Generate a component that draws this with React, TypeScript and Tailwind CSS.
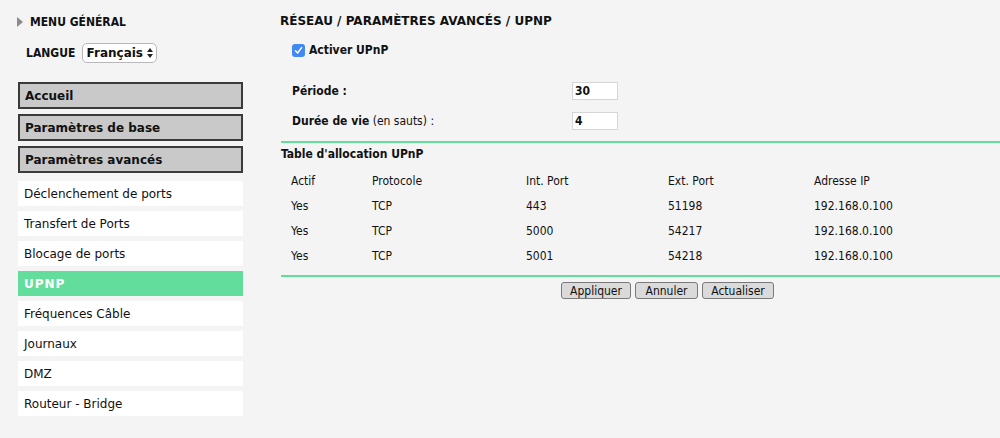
const grayItems = ['Accueil', 'Paramètres de base', 'Paramètres avancés']

const subItems = [
  'Déclenchement de ports',
  'Transfert de Ports',
  'Blocage de ports',
  'UPNP',
  'Fréquences Câble',
  'Journaux',
  'DMZ',
  'Routeur - Bridge',
]

const rows = [
  ['Yes', 'TCP', '443', '51198', '192.168.0.100'],
  ['Yes', 'TCP', '5000', '54217', '192.168.0.100'],
  ['Yes', 'TCP', '5001', '54218', '192.168.0.100'],
]

const buttons = [
  { label: 'Appliquer', width: 'w-[70px]' },
  { label: 'Annuler', width: 'w-[63px]' },
  { label: 'Actualiser', width: 'w-[72px]' },
]

const verdana = "font-['DejaVu_Sans',Verdana,sans-serif]"
const tahoma = "font-['DejaVu_Sans_Condensed','DejaVu_Sans',Tahoma,sans-serif]"

function Sidebar() {
  return (
    <aside className={`w-[262px] shrink-0 pl-[18px] pr-[19px] ${verdana}`}>
      <div className="flex h-[40px] items-center gap-[7px] pt-[3px]">
        <svg width="6" height="10" viewBox="0 0 6 10" className="-ml-[1px]">
          <path d="M0 0 L6 5 L0 10 Z" fill="#8a8a8a" />
        </svg>
        <span className={`text-[12px] font-bold text-[#111] ${tahoma}`}>MENU GÉNÉRAL</span>
      </div>
      <div className="mt-[3px] flex items-center gap-[7px] pl-[8px]">
        <span className={`text-[12px] font-bold text-[#111] ${tahoma}`}>LANGUE</span>
        <div className="flex h-[20px] w-[75px] items-center justify-center gap-[4px] rounded-[5px] border border-[#b8b8b8] bg-white text-[12px] font-bold text-[#111]">
          Français
          <svg width="6" height="10" viewBox="0 0 6 10">
            <path d="M3 0 L6 4 L0 4 Z M3 10 L6 6 L0 6 Z" fill="#222" />
          </svg>
        </div>
      </div>
      <ul className="mt-[19px] flex flex-col gap-[5px]">
        {grayItems.map((item) => (
          <li
            key={item}
            className="flex h-[27px] items-center border-2 border-[#3a3a3a] bg-[#c9c9c9] pl-[5px] text-[12px] font-bold text-[#111]"
          >
            {item}
          </li>
        ))}
      </ul>
      <ul className="mt-[8px] flex flex-col gap-[5px]">
        {subItems.map((item) =>
          item === 'UPNP' ? (
            <li
              key={item}
              className="flex h-[25px] items-center bg-[#62dd9b] pl-[6px] text-[12px] font-bold tracking-[1px] text-white"
            >
              {item}
            </li>
          ) : (
            <li
              key={item}
              className="flex h-[25px] items-center bg-white pl-[6px] text-[12px] text-[#111]"
            >
              {item}
            </li>
          ),
        )}
      </ul>
    </aside>
  )
}

function Content() {
  return (
    <main className={`flex-1 pt-[12px] ${tahoma}`}>
      <h1 className={`ml-[18px] text-[12px] font-bold text-[#111] ${verdana}`}>
        RÉSEAU / PARAMÈTRES AVANCÉS / UPNP
      </h1>
      <label className="ml-[30px] mt-[11px] flex items-center gap-[4px] text-[12px] font-bold text-[#111]">
        <span className="flex h-[13px] w-[13px] items-center justify-center rounded-[3px] bg-[#4288f5]">
          <svg width="9" height="9" viewBox="0 0 9 9">
            <path d="M1.5 4.8 L3.6 7 L7.6 1.6" stroke="white" strokeWidth="1.5" fill="none" strokeLinecap="round" strokeLinejoin="round" />
          </svg>
        </span>
        Activer UPnP
      </label>
      <div className="ml-[30px] mt-[23px] flex flex-col gap-[12px] text-[12px] text-[#111]">
        <div className="flex items-center">
          <span className="w-[280px] font-bold">Période :</span>
          <span className="flex h-[18px] w-[46px] items-center border border-[#d6d6d6] bg-white pl-[2px] font-bold">30</span>
        </div>
        <div className="flex items-center">
          <span className="w-[280px]">
            <b>Durée de vie</b> (en sauts) :
          </span>
          <span className="flex h-[18px] w-[46px] items-center border border-[#d6d6d6] bg-white pl-[2px] font-bold">4</span>
        </div>
      </div>
      <div className="ml-[19px] mt-[11px] border-t-2 border-[#62dd9b]" />
      <h2 className="ml-[19px] mt-[2px] text-[12px] font-bold text-[#111]">Table d'allocation UPnP</h2>
      <table className="ml-[29px] mt-[5px] text-[12px] text-[#111]">
        <thead>
          <tr className="h-[25px] text-left">
            <th className="w-[81px] font-normal">Actif</th>
            <th className="w-[154px] font-normal">Protocole</th>
            <th className="w-[142px] font-normal">Int. Port</th>
            <th className="w-[146px] font-normal">Ext. Port</th>
            <th className="font-normal">Adresse IP</th>
          </tr>
        </thead>
        <tbody>
          {rows.map((row, rowIndex) => (
            <tr key={rowIndex} className="h-[25px]">
              {row.map((cell, cellIndex) => (
                <td key={cellIndex}>{cell}</td>
              ))}
            </tr>
          ))}
        </tbody>
      </table>
      <div className="ml-[19px] mt-[7px] border-t-2 border-[#62dd9b]" />
      <div className="ml-[299px] mt-[5px] flex gap-[4px] text-[12px] text-[#111]">
        {buttons.map((button) => (
          <button
            key={button.label}
            className={`h-[17px] rounded-[3px] border border-[#7a7a7a] bg-[#dadada] leading-none ${button.width}`}
          >
            {button.label}
          </button>
        ))}
      </div>
    </main>
  )
}

export default function App() {
  return (
    <div className="flex h-[438px] w-[1000px] overflow-hidden bg-[#f4f4f4]">
      <Sidebar />
      <Content />
    </div>
  )
}
